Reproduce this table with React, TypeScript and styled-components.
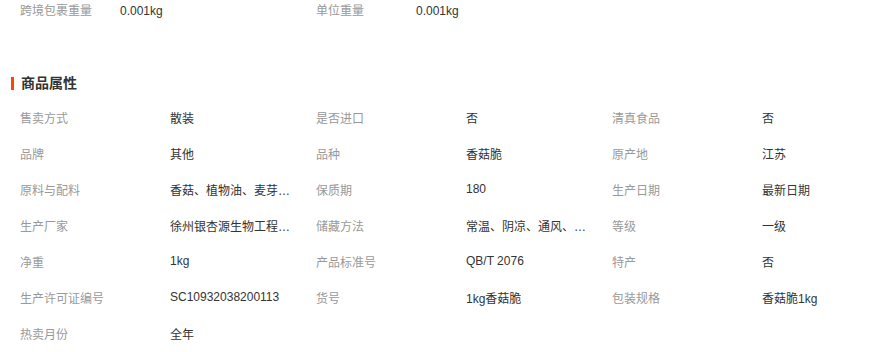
import React from 'react';
import styled, {createGlobalStyle} from 'styled-components';

type Attr = {
    label: string
    value: string
}

const logistics: Attr[] = [
    {label: '跨境包裹重量', value: '0.001kg'},
    {label: '单位重量', value: '0.001kg'},
]

const attrs: Attr[] = [
    {label: '售卖方式', value: '散装'},
    {label: '是否进口', value: '否'},
    {label: '清真食品', value: '否'},
    {label: '品牌', value: '其他'},
    {label: '品种', value: '香菇脆'},
    {label: '原产地', value: '江苏'},
    {label: '原料与配料', value: '香菇、植物油、麦芽糖、白砂糖'},
    {label: '保质期', value: '180'},
    {label: '生产日期', value: '最新日期'},
    {label: '生产厂家', value: '徐州银杏源生物工程有限公司'},
    {label: '储藏方法', value: '常温、阴凉、通风、干燥处'},
    {label: '等级', value: '一级'},
    {label: '净重', value: '1kg'},
    {label: '产品标准号', value: 'QB/T 2076'},
    {label: '特产', value: '否'},
    {label: '生产许可证编号', value: 'SC10932038200113'},
    {label: '货号', value: '1kg香菇脆'},
    {label: '包装规格', value: '香菇脆1kg'},
    {label: '热卖月份', value: '全年'},
]

export default function App() {
    return (
        <>
            <GlobalStyle/>
            <Page>
                <TopGrid>
                    {logistics.map(item => (
                        <Pair key={item.label}>
                            <Label $width={100}>{item.label}</Label>
                            <Value>{item.value}</Value>
                        </Pair>
                    ))}
                </TopGrid>
                <Heading>
                    <Bar/>
                    商品属性
                </Heading>
                <AttrGrid>
                    {attrs.map(item => (
                        <Pair key={item.label}>
                            <Label $width={150}>{item.label}</Label>
                            <Value title={item.value}>{item.value}</Value>
                        </Pair>
                    ))}
                </AttrGrid>
            </Page>
        </>
    )
}

const GlobalStyle = createGlobalStyle`
  body {
    margin: 0;
    background: #ffffff;
    font-family: Tahoma, "Liberation Sans", "Noto Sans CJK SC", sans-serif;
    font-size: 12px;
    color: #333333;
  }
`

const Page = styled.div`
  width: 888px;
  height: 352px;
  overflow: hidden;
`

const TopGrid = styled.div`
  display: grid;
  grid-template-columns: 296px 296px;
  padding-left: 20px;
  line-height: 22px;
`

const Pair = styled.div`
  display: flex;
  align-items: center;
  min-width: 0;
`

const Label = styled.span<{ $width: number }>`
  flex: 0 0 ${p => p.$width}px;
  color: #999999;
  white-space: nowrap;
`

const Value = styled.span`
  max-width: 125px;
  color: #333333;
  white-space: nowrap;
  overflow: hidden;
  text-overflow: ellipsis;
`

const Heading = styled.h3`
  display: flex;
  align-items: center;
  gap: 7px;
  margin: 51px 0 0;
  padding-left: 11px;
  font-size: 14px;
  font-weight: bold;
  line-height: 20px;
  color: #333333;
`

const Bar = styled.span`
  width: 3px;
  height: 13px;
  background: #ff4400;
`

const AttrGrid = styled.div`
  display: grid;
  grid-template-columns: repeat(3, 296px);
  grid-auto-rows: 36px;
  margin-top: 6px;
  padding-left: 20px;
`
